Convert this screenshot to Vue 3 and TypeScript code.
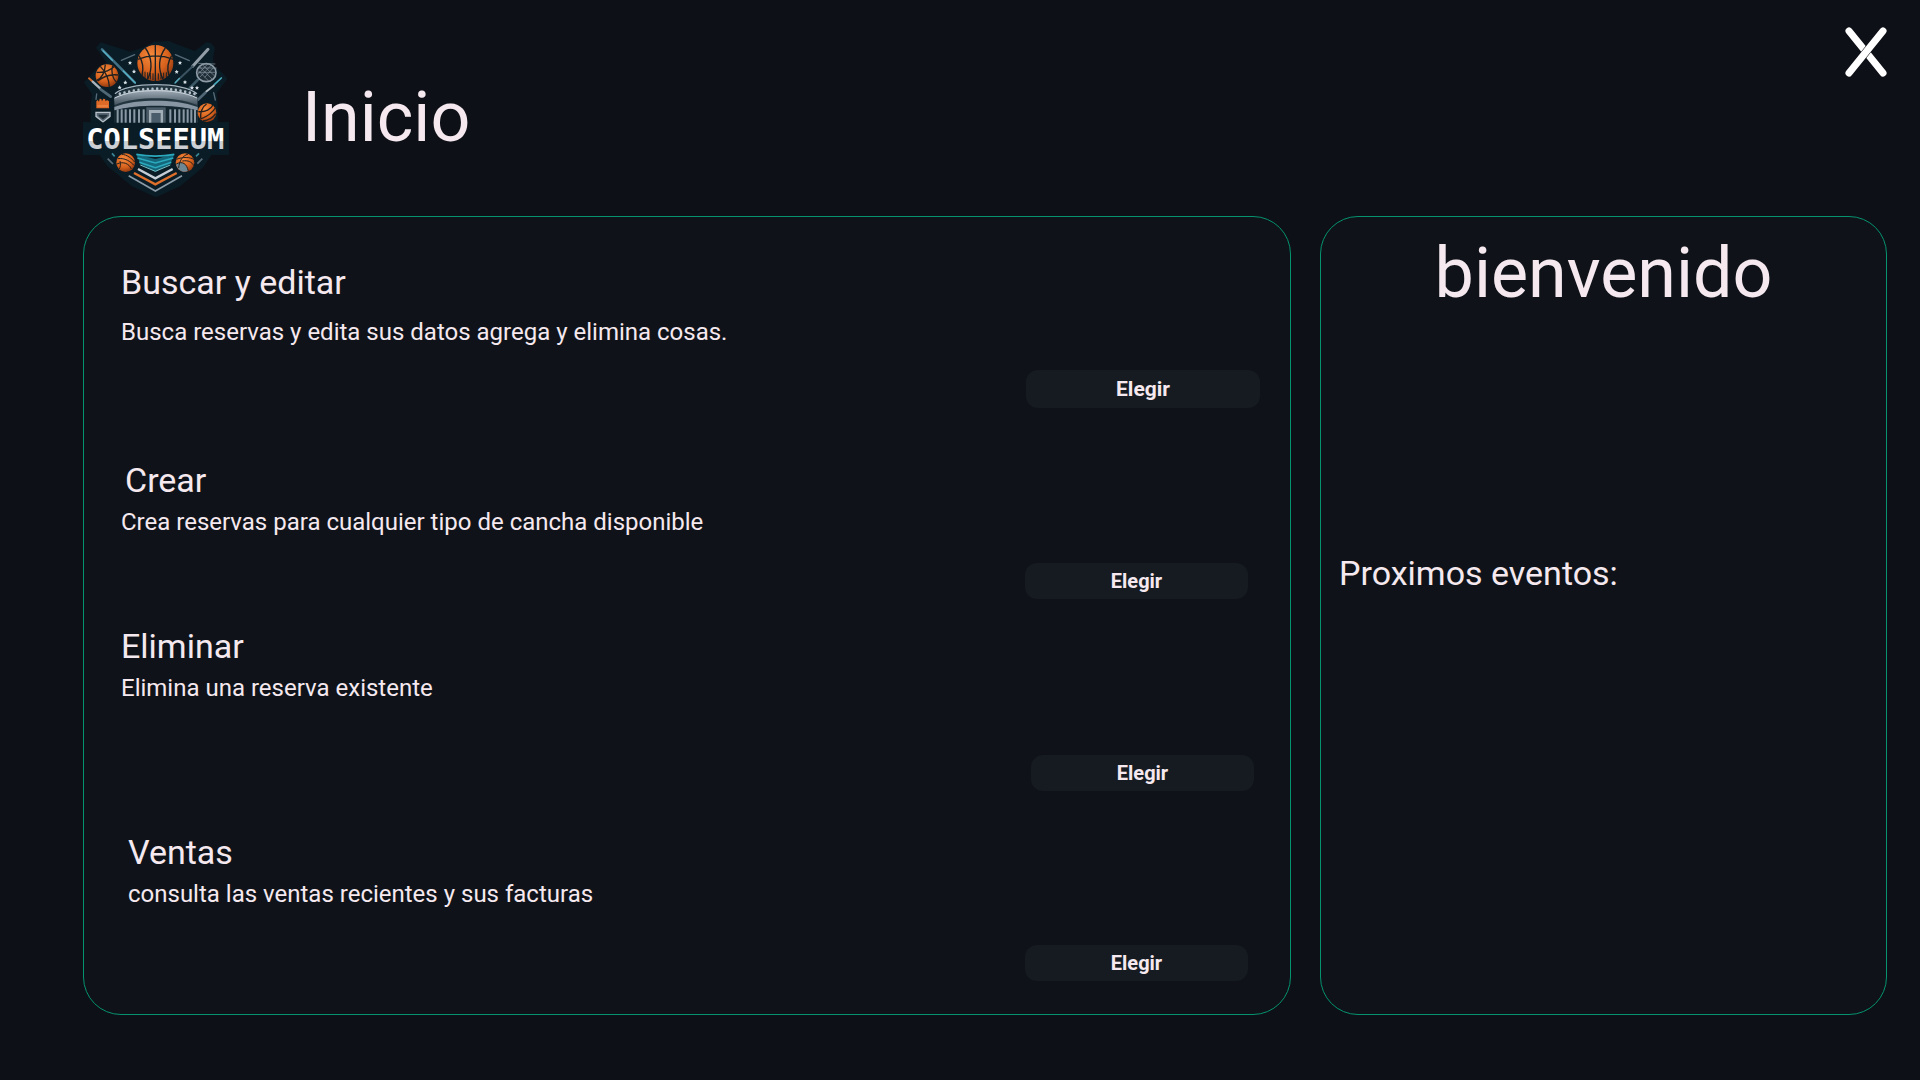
<script setup lang="ts">
interface MenuOption {
  id: string
  title: string
  description: string
  action: string
}

const options: MenuOption[] = [
  { id: 'buscar', title: 'Buscar y editar', description: 'Busca reservas y edita sus datos agrega y elimina cosas.', action: 'Elegir' },
  { id: 'crear', title: 'Crear', description: 'Crea reservas para cualquier tipo de cancha disponible', action: 'Elegir' },
  { id: 'eliminar', title: 'Eliminar', description: 'Elimina una reserva existente', action: 'Elegir' },
  { id: 'ventas', title: 'Ventas', description: 'consulta las ventas recientes y sus facturas', action: 'Elegir' },
]

// Rows of openings under the stadium roof
const arches = Array.from({ length: 17 }, (_, i) => {
  const x = 146 + i * 14
  const d = (x - 258) / 112
  return { x, y: 172 + 15 * d * d }
})
const columns = [140, 152, 164, 177, 190, 204, 218, 298, 312, 325, 338, 350, 361, 372]
const stars = [[180, 98], [192, 124], [166, 157], [149, 172], [330, 98], [320, 125], [345, 156], [366, 173], [381, 173]]
</script>

<template>
  <div class="page">
    <header class="top">
      <svg class="logo" viewBox="39 30 438 471" role="img" aria-label="Colseeum">
        <defs>
          <radialGradient id="ball" cx="0.4" cy="0.3" r="0.75">
            <stop offset="0" stop-color="#f58a3c" />
            <stop offset="0.6" stop-color="#d8621d" />
            <stop offset="1" stop-color="#8a3510" />
          </radialGradient>
          <linearGradient id="steel" x1="0" y1="0" x2="0" y2="1">
            <stop offset="0" stop-color="#a3b0bb" />
            <stop offset="1" stop-color="#43525e" />
          </linearGradient>
          <linearGradient id="word" x1="0" y1="0" x2="0" y2="1">
            <stop offset="0.55" stop-color="#ffffff" />
            <stop offset="0.56" stop-color="#ccd0d4" />
          </linearGradient>
        </defs>
        <path fill="#0a1c25" d="M92 37l-14 16 32 45-23 10-35 39-10 10 24 36-4 30v53H39v99h50l22 32 75 62 72 33 72-33 70-58 24-36h53v-99h-34v-58l-3-28 32-44-12-14-28-25-3-23 6-31-12-14-14-2-34 26-49-18-30-12-44 2-31 17-40 13z" />

        <!-- Cues and bats -->
        <g fill="none" stroke-linecap="round">
          <path stroke="#426f83" stroke-width="8" d="M96 58l98 99" />
          <path stroke="#56b2c8" stroke-width="4" d="M99 62l28 29m33 32l36 36" />
          <path stroke="#929da7" stroke-width="9" d="M414 58l-46 51" />
          <path stroke="#3b5361" stroke-width="6" d="M368 109l-50 47" />
          <path stroke="#53acc0" stroke-width="4" d="M328 145l-13 14" />
          <path stroke="#d0692b" stroke-width="6" d="M57 145l10 9" />
          <path stroke="#a9b4bd" stroke-width="7" d="M68 155l22 20" />
          <path stroke="#506876" stroke-width="8" d="M92 178l30 22" />
          <path stroke="#4cabc0" stroke-width="5" d="M454 144l-21 20" />
          <path stroke="#b4bfc7" stroke-width="6" d="M431 167l-23 18" />
          <path stroke="#506876" stroke-width="8" d="M406 188l-22 21" />
          <path stroke="#566b79" stroke-width="4" d="M154 91l40-17m122 0l42 18M78 208l2-16m356 18l-5-22" />
        </g>

        <!-- Racket -->
        <path d="M383 150l-24 24" stroke="#3c5867" stroke-width="8" stroke-linecap="round" />
        <ellipse cx="409" cy="128" rx="29" ry="27" fill="#202e38" stroke="#8d9ba7" stroke-width="5" />
        <path fill="none" stroke="#8795a0" stroke-width="2" d="M390 112l36 35m-28-42l36 33m-49-16l31 31m-1-53l-34 36m43-31l-34 36m42-30l-28 31m-19-42l51 2m-54 12h58m-56 13h52" />

        <g fill="#d4dde3">
          <path v-for="(s, i) in stars" :key="i" :transform="`translate(${s[0]} ${s[1]})`" d="M0-6l2 4 4 1-3 3 1 4-4-2-4 2 1-4-3-3 4-1z" />
        </g>

        <!-- Large ball -->
        <circle cx="256" cy="99" r="54" fill="url(#ball)" />
        <g fill="none" stroke="#1a2023" stroke-width="4">
          <path d="M256 45v108M203 88c34-13 73-13 107 0M226 54c19 26 23 61 7 94M286 54c-20 27-23 62-7 94M207 77c12 19 14 38 9 57m89-57c-12 19-14 38-9 57" />
          <path stroke-width="3" d="M218 126v15m7-16v19m8-17v20m8-18v19m8-18v20m16-20v19m8-19v18m8-20v17m8-18v15m7-17v11" />
        </g>

        <!-- Small upper ball -->
        <circle cx="111" cy="137" r="34" fill="url(#ball)" />
        <path fill="none" stroke="#24201d" stroke-width="4" d="M80 127c23 2 43-8 54-18M91 109c17 18 26 38 27 61M106 104c-2 27-13 42-26 47M83 153c21-16 42-21 61-18M128 107c-6 19 0 39 11 49" />

        <!-- Stadium -->
        <path fill="#233640" d="M133 199c15-18 64-33 124-33s110 15 127 33v80H133z" />
        <path fill="none" stroke="#a4b3bf" stroke-width="4" d="M135 191c18-17 67-27 122-27s104 10 124 27" />
        <g fill="#b2bec8">
          <rect v-for="a in arches" :key="a.x" :x="a.x" :y="a.y" width="7" height="9" rx="3" />
        </g>
        <path fill="url(#steel)" d="M132 204c33-19 80-25 125-25s93 6 126 25l-2 21c-36-15-82-20-124-20s-88 5-123 20z" />
        <path fill="none" stroke="#cbd4dc" stroke-width="3" d="M134 204c34-17 79-22 123-22s90 5 124 22" />
        <path fill="#8796a2" d="M133 231c36-15 82-19 124-19s88 4 126 19v10c-38-10-83-14-126-14s-89 4-124 14z" />
        <path fill="#142731" d="M134 242c36-10 80-13 123-13s88 3 125 13v38H134z" />
        <g fill="#8998a4">
          <rect v-for="c in columns" :key="c" :x="c" y="238" width="6" height="41" />
        </g>
        <path fill="#4b5c68" d="M229 232h58v47h-58z" />
        <path fill="#a1aeb7" d="M237 240h42v39h-42z" />
        <path fill="#4a5d6a" d="M244 249h28v30h-28z" />

        <!-- Glove and plate -->
        <path fill="#dd6a26" d="M79 235v-21l4-4 4 5 2-9 5 1 2 7 4-8 5 1 2 7 4-4 6 4v21z" />
        <path stroke="#ffac74" stroke-width="2" d="M82 228h32" />
        <path fill="#566773" stroke="#b8c1ca" stroke-width="4" d="M78 247h42v12l-21 17-21-17z" />
        <path fill="#202e38" d="M86 254h26v4l-13 10-13-10z" />

        <!-- Right ball -->
        <circle cx="411" cy="248" r="28" fill="url(#ball)" />
        <path fill="none" stroke="#24201d" stroke-width="4" d="M385 245c22 2 38-8 44-20M392 267c24-9 38-22 46-36M399 273c19-2 30-10 38-22M410 222c-14 8-20 27-18 43" />

        <!-- Banner -->
        <path fill="#0a1c25" d="M39 278h437v96H39z" />
        <text class="logo-word" x="256" y="358" text-anchor="middle" fill="url(#word)">COLSEEUM</text>

        <!-- Lower chevrons -->
        <path fill="#14677a" d="M199 373l57 14 57-14-12 29-45 23-45-23z" />
        <g fill="none" stroke-width="5">
          <path stroke="#2ba9bd" d="M199 373c37 7 77 7 114 0M202 384l54 15 54-15M208 397l48 16 48-16" />
          <path stroke="#77c4ca" stroke-width="3" d="M211 405l45 19 45-19" />
          <path stroke="#c5ced6" stroke-width="7" d="M204 417l52 28 52-28" />
          <path stroke="#df702b" stroke-width="7" d="M192 429l64 34 64-34" />
          <path stroke="#8b9ba8" d="M176 437l80 46 80-46" />
          <path stroke="#398697" d="M126 370l8 9m244 0l9-9" />
          <path stroke="#5d717d" d="M113 386l16 16m253-1l15-15" />
        </g>
        <circle cx="167" cy="398" r="28" fill="url(#ball)" />
        <path fill="none" stroke="#25201e" stroke-width="3" d="M143 386c22-3 38 8 50 21M141 402c18-9 37-1 43 15M155 373c15 0 31 13 39 23M150 393c2 9 2 17-3 25" />
        <circle cx="345" cy="398" r="28" fill="url(#ball)" />
        <path fill="#6d8794" d="M318 402c15-8 28-5 37 20-16 9-32-1-37-20z" />
        <path fill="none" stroke="#25201e" stroke-width="3" d="M319 388c20-8 41-7 54 1M319 402c18-10 32-1 36 22M354 372c-17 6-26 20-28 42M337 393c18-3 29 3 34 14" />
      </svg>
      <h1 class="display">Inicio</h1>
      <button class="close" type="button" aria-label="Cerrar">
        <svg viewBox="0 0 42 50" aria-hidden="true">
          <g fill="none" stroke-linecap="round">
            <path stroke="#fff" stroke-width="7" d="M4 4l34 42" />
            <path stroke="#0d1017" stroke-width="8" stroke-linecap="butt" d="M17 30l8-10" />
            <path stroke="#fff" stroke-width="7" d="M38 4L4 46" />
          </g>
        </svg>
      </button>
    </header>

    <main class="panels">
      <div class="panel menu">
        <section v-for="option in options" :key="option.id" class="option" :class="option.id">
          <h2 class="title">{{ option.title }}</h2>
          <p class="description">{{ option.description }}</p>
          <button class="choose" type="button">{{ option.action }}</button>
        </section>
      </div>

      <aside class="panel welcome">
        <h2 class="display">bienvenido</h2>
        <h3 class="title">Proximos eventos:</h3>
      </aside>
    </main>
  </div>
</template>

<style>
body {
  margin: 0;
  background: #0d1017;
}
</style>

<style scoped>
.page {
  box-sizing: border-box;
  min-height: 100vh;
  padding: 0 33px 65px 83px;
  display: flex;
  flex-direction: column;
  background: #0d1017;
  color: #f5e9ef;
  font-family: Roboto, "Liberation Sans", sans-serif;
}

h1,
h2,
h3,
p {
  margin: 0;
  font-weight: 400;
}

button {
  border: 0;
  padding: 0;
  color: inherit;
  font-family: inherit;
  cursor: pointer;
}

.top {
  display: flex;
  align-items: flex-start;
  height: 176px;
  padding-top: 40px;
}

.logo {
  width: 146px;
  height: 157px;
}

.logo-word {
  font-family: "DejaVu Sans Mono", monospace;
  font-size: 86px;
  font-weight: 700;
}

.display {
  font-size: 70px;
  line-height: 80px;
}

.top .display {
  margin: 37px auto 0 73px;
}

.close {
  width: 42px;
  height: 50px;
  margin-top: -13px;
  background: none;
}

.close svg {
  display: block;
}

.panels {
  flex: 1;
  display: grid;
  grid-template-columns: 1208fr 567fr;
  gap: 29px;
}

.panel {
  box-sizing: border-box;
  border: 1px solid #06926e;
  border-radius: 38px;
  background: #0f1319;
}

.menu {
  display: grid;
  grid-template-rows: 198fr 166fr 206fr 150fr;
  padding: 45px 42px 32px 37px;
}

.option {
  display: flex;
  flex-direction: column;
}

.title {
  font-size: 34px;
  line-height: 40px;
}

.description {
  margin-top: 8px;
  font-size: 24px;
  line-height: 28px;
}

.choose {
  align-self: flex-end;
  width: 223px;
  height: 36px;
  border-radius: 12px;
  background: #161b21;
  font-size: 20px;
  font-weight: 700;
}

.buscar .description {
  margin-top: 16px;
}

.buscar .choose {
  width: 234px;
  height: 38px;
  margin: 24px -12px 0 0;
  font-size: 21px;
}

.crear .title {
  padding-left: 4px;
}

.crear .choose {
  margin-top: 27px;
}

.eliminar .choose {
  margin: 53px -6px 0 0;
}

.ventas {
  padding-left: 7px;
}

.ventas .choose {
  margin-top: 37px;
}

.welcome {
  padding: 16px 18px;
}

.welcome .display {
  text-align: center;
}

.welcome .title {
  margin-top: 240px;
}
</style>
